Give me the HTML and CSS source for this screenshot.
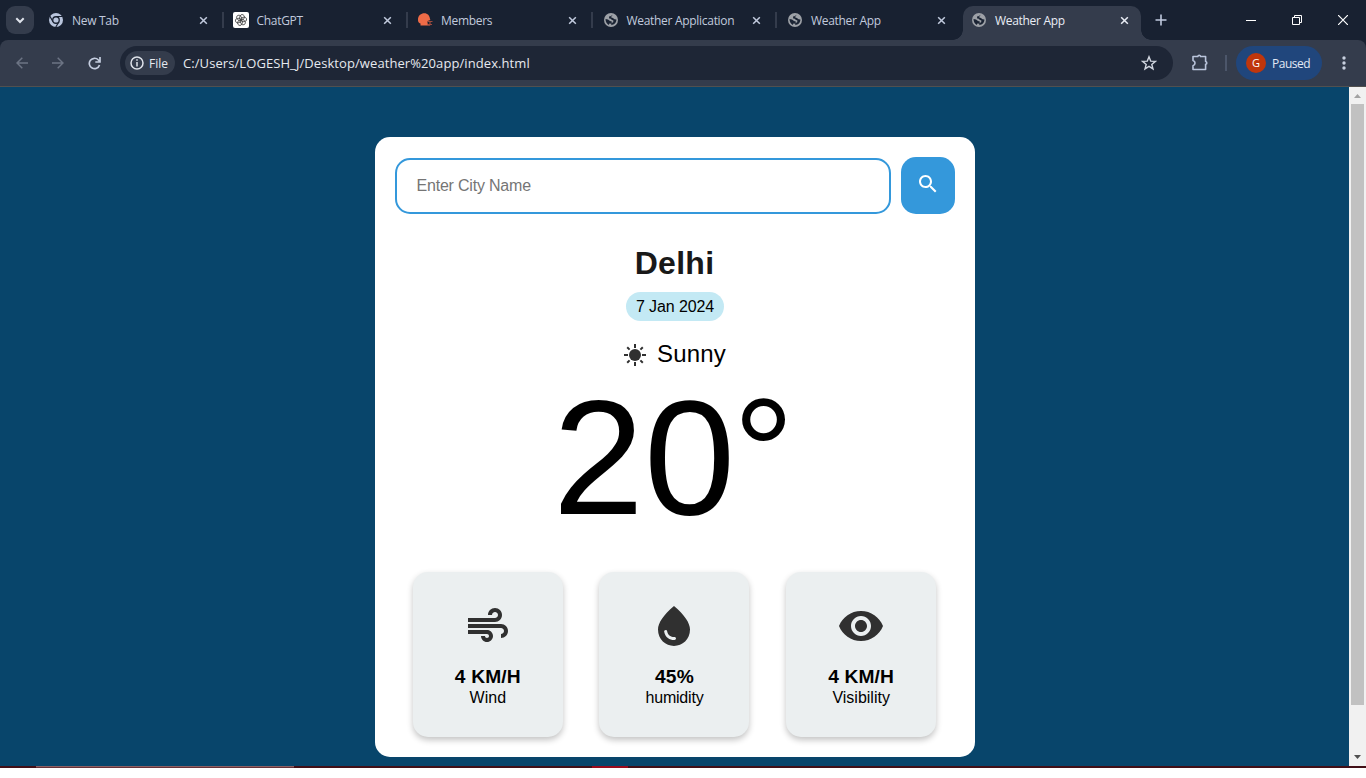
FILE: index.html
```
<!DOCTYPE html>
<html lang="en">
<head>
<meta charset="utf-8">
<title>Weather App</title>
<link rel="stylesheet" href="styles.css">
</head>
<body>
<svg class="defs" width="0" height="0">
  <symbol id="x" viewBox="0 0 10 10"><path d="M1.3 1.3l7.4 7.4M8.7 1.3L1.3 8.7" stroke="currentColor" stroke-width="1.7" fill="none"/></symbol>
  <symbol id="globe" viewBox="0 0 14 14"><circle cx="7" cy="7" r="7" fill="#9da1a7"/><path d="M1.500 6l2.500.5 2 1.500 1.800.4-.2 1.800-2.200.3-.6 1.500C3 11 1.500 9 1.500 6zM8.800 1.800L6.500 3.200 5 3.600l.2 1.800 1.600.4.8 1 1.800.6-.2 1.800-1.600.8-.4 2.200c3.200-.4 5.300-2.700 5.200-5.600l-1.800-.4-1.700-1.300-1.900-.6.6-1.100z" fill="#1b2434"/></symbol>
</svg>
<div class="browser">
  <div class="tabstrip">
    <div class="tabsearch"><svg width="10" height="7" viewBox="0 0 10 7"><path d="M1.300 1.300L5 5l3.700-3.700" stroke="#dfe3ec" stroke-width="2" fill="none"/></svg></div>
    <div class="tabs">
      <div class="tab"><svg class="fav" viewBox="0 0 16 16"><circle cx="8" cy="8" r="7" fill="#b9c5dd"/><path d="M8 4.500h6.500M5 9.700L1.900 4.200M11 9.700L7.800 15" stroke="#182131" stroke-width="1.200"/><circle cx="8" cy="8" r="3.900" fill="#182131"/><circle cx="8" cy="8" r="2.600" fill="#b9c5dd"/></svg><span class="title">New Tab</span><svg class="close"><use href="#x"/></svg></div>
      <div class="tab"><svg class="fav" viewBox="0 0 16 16"><rect width="16" height="16" rx="2" fill="#fff"/><g fill="none" stroke="#444" stroke-width=".8"><ellipse cx="8" cy="5.200" rx="2.300" ry="2.900" transform="rotate(20 8 8)"/><ellipse cx="8" cy="5.200" rx="2.300" ry="2.900" transform="rotate(80 8 8)"/><ellipse cx="8" cy="5.200" rx="2.300" ry="2.900" transform="rotate(140 8 8)"/><ellipse cx="8" cy="5.200" rx="2.300" ry="2.900" transform="rotate(200 8 8)"/><ellipse cx="8" cy="5.200" rx="2.300" ry="2.900" transform="rotate(260 8 8)"/><ellipse cx="8" cy="5.200" rx="2.300" ry="2.900" transform="rotate(320 8 8)"/></g></svg><span class="title">ChatGPT</span><svg class="close"><use href="#x"/></svg></div>
      <div class="tab"><svg class="fav" viewBox="0 0 16 16"><path d="M3.500 13.500V11.500C1.500 11 .8 9.500 1 7c.4-3.500 3-5.700 6.300-5.700S12.700 3.600 13 7l.4 1-2.900 1v2.500l3 2z" fill="#ee6b47"/><path d="M10 9.500h5.500M10.500 12.500h4.500M13 9.500v3" stroke="#9c4b3e" stroke-width="1.200"/></svg><span class="title">Members</span><svg class="close"><use href="#x"/></svg></div>
      <div class="tab"><svg class="fav globe"><use href="#globe"/></svg><span class="title">Weather Application</span><svg class="close"><use href="#x"/></svg></div>
      <div class="tab"><svg class="fav globe"><use href="#globe"/></svg><span class="title">Weather App</span><svg class="close"><use href="#x"/></svg></div>
      <div class="tab active"><svg class="fav globe"><use href="#globe"/></svg><span class="title">Weather App</span><svg class="close"><use href="#x"/></svg></div>
    </div>
    <svg class="plus" width="12" height="12" viewBox="0 0 12 12"><path d="M6 .5v11M.5 6h11" stroke="#c0cadf" stroke-width="1.600"/></svg>
    <div class="controls">
      <svg width="10" height="10" viewBox="0 0 10 10"><path d="M0 5.500h10" stroke="#fff"/></svg>
      <svg width="10" height="10" viewBox="0 0 10 10"><path d="M.5 2.500h7v7h-7zM2.500 2.500v-2h7v7h-2" stroke="#fff" fill="none"/></svg>
      <svg width="10" height="10" viewBox="0 0 10 10"><path d="M0 0l10 10M10 0L0 10" stroke="#fff" stroke-width="1.200"/></svg>
    </div>
  </div>
  <div class="toolbar">
    <svg class="nav" width="12" height="12" viewBox="0 0 12 12"><path d="M12 6H1M6.300.7L1 6l5.300 5.300" stroke="#6c7484" stroke-width="1.500" fill="none"/></svg>
    <svg class="nav fwd" width="12" height="12" viewBox="0 0 12 12"><path d="M0 6h11M5.700.7L11 6l-5.300 5.300" stroke="#6c7484" stroke-width="1.500" fill="none"/></svg>
    <svg class="nav reload" width="13" height="13" viewBox="0 0 13 13"><path d="M11.500 8A5.200 5.200 0 1 1 10.400 3L12 4.600M12 0v5H7.300" stroke="#c5cee0" stroke-width="1.700" fill="none"/></svg>
    <div class="omnibox">
      <div class="chip"><svg width="14" height="14" viewBox="0 0 14 14"><circle cx="7" cy="7" r="6" stroke="#dfe3ea" stroke-width="1.500" fill="none"/><path d="M7 6v4.500M7 3.300v1.500" stroke="#dfe3ea" stroke-width="1.500"/></svg><span class="file">File</span></div>
      <span class="url">C:/Users/LOGESH_J/Desktop/weather%20app/index.html</span>
      <svg class="star" width="16" height="16" viewBox="0 0 16 16"><path d="M8 1.800l1.700 4.300 4.700.3-3.600 3 1.200 4.500L8 11.400l-4 2.500 1.200-4.500-3.600-3 4.700-.3z" stroke="#d0d5df" stroke-width="1.400" fill="none"/></svg>
    </div>
    <svg class="ext" width="18" height="18" viewBox="0 0 18 18"><path d="M2 2.500h4.800c.4-1.600 2.400-1.600 2.800 0h5v5c1.600.4 1.600 2.400 0 2.800v5.200H2v-3.800c2.700-.8 2.700-4.400 0-5.200z" stroke="#bac5dc" stroke-width="1.600" stroke-linejoin="round" fill="none"/></svg>
    <div class="divider"></div>
    <div class="profile"><span class="avatar">G</span><span class="paused">Paused</span></div>
    <svg class="menu" width="4" height="14" viewBox="0 0 4 14"><g fill="#c8d0df"><circle cx="2" cy="2" r="1.700"/><circle cx="2" cy="7" r="1.700"/><circle cx="2" cy="12" r="1.700"/></g></svg>
  </div>
</div>
<div class="viewport">
  <main class="page">
    <section class="card">
      <div class="search">
        <input class="city-input" type="text" placeholder="Enter City Name">
        <button class="search-btn"><svg width="24" height="24" viewBox="0 0 24 24" fill="#fff"><path d="M15.500 14h-.79l-.28-.27C15.410 12.590 16 11.110 16 9.500 16 5.910 13.090 3 9.500 3S3 5.910 3 9.500 5.910 16 9.500 16c1.610 0 3.090-.59 4.230-1.570l.27.28v.79l5 4.990L20.490 19l-4.990-5zm-6 0C7.010 14 5 11.990 5 9.500S7.010 5 9.500 5 14 7.010 14 9.500 11.990 14 9.500 14z"/></svg></button>
      </div>
      <h1 class="city">Delhi</h1>
      <div class="date">7 Jan 2024</div>
      <div class="condition"><svg width="24" height="24" viewBox="0 0 24 24"><circle cx="12" cy="12" r="6" fill="#303030"/><path d="M1 12h4M19 12h4M12 1v4M12 19v4M4.200 4.200l2.400 2.400M17.400 17.400l2.400 2.400M4.200 19.800l2.400-2.400M17.400 6.600l2.400-2.400" stroke="#303030" stroke-width="2"/></svg><span class="sky">Sunny</span></div>
      <div class="temp">20<span class="degree">°</span></div>
      <div class="details">
        <div class="detail"><svg width="48" height="48" viewBox="0 0 24 24"><path d="M14.500 17c0 1.650-1.350 3-3 3s-3-1.350-3-3h2c0 .55.45 1 1 1s1-.45 1-1-.45-1-1-1H2v-2h9.500c1.650 0 3 1.350 3 3zM19 6.500C19 4.570 17.430 3 15.500 3S12 4.570 12 6.500h2c0-.83.67-1.500 1.500-1.500s1.500.67 1.500 1.500S16.330 8 15.500 8H2v2h13.500c1.930 0 3.500-1.570 3.500-3.500zm-.5 4.500H2v2h16.500c.83 0 1.500.67 1.500 1.500s-.67 1.500-1.500 1.500v2c1.930 0 3.500-1.570 3.500-3.500S20.430 11 18.500 11z"/></svg><strong>4 KM/H</strong><span>Wind</span></div>
        <div class="detail"><svg width="48" height="48" viewBox="0 0 24 24"><path d="M12 2c-5.330 4.550-8 8.480-8 11.800 0 4.980 3.800 8.200 8 8.200s8-3.220 8-8.200c0-3.320-2.670-7.250-8-11.800zm-4.170 12c.37 0 .67.26.74.6.41 2.220 2.280 2.980 3.640 2.870.43-.02.79.32.79.75 0 .4-.32.73-.72.75-2.130.13-4.620-1.090-5.190-4.120-.08-.45.28-.85.74-.85z"/></svg><strong>45%</strong><span class="tight">humidity</span></div>
        <div class="detail"><svg width="48" height="48" viewBox="0 0 24 24"><path d="M12 4.500C7 4.500 2.730 7.610 1 12c1.730 4.390 6 7.500 11 7.500s9.270-3.110 11-7.500c-1.730-4.390-6-7.500-11-7.500zM12 17c-2.760 0-5-2.240-5-5s2.240-5 5-5 5 2.240 5 5-2.240 5-5 5zm0-8c-1.660 0-3 1.340-3 3s1.340 3 3 3 3-1.340 3-3-1.340-3-3-3z"/></svg><strong>4 KM/H</strong><span>Visibility</span></div>
      </div>
    </section>
  </main>
  <div class="scrollbar">
    <svg width="7" height="4" viewBox="0 0 7 4"><path d="M0 4L3.500 0 7 4z" fill="#a3a3a3"/></svg>
    <div class="thumb"></div>
    <svg class="down" width="7" height="4" viewBox="0 0 7 4"><path d="M0 0l3.500 4L7 0z" fill="#505050"/></svg>
  </div>
</div>
<div class="taskbar"><div class="task-search"></div><div class="task-active"></div></div>
</body>
</html>
```
FILE: styles.css
```
* { box-sizing: border-box; }
body { margin: 0; height: 778px; overflow: hidden; background: #fff; font-family: "Liberation Sans", Arial, sans-serif; }
svg { display: block; flex: none; }
.defs { position: absolute; }
.browser { height: 87px; background: #182131; border-bottom: 1px solid #51504f; font-family: "Open Sans", "Noto Sans", sans-serif; }
.tabstrip { height: 40px; display: flex; align-items: center; background: #182131; }
.tabsearch { width: 28px; height: 28px; margin-left: 6px; border-radius: 9px; background: #343c4c; display: flex; align-items: center; justify-content: center; }
.tabs { display: flex; margin-left: 4px; height: 40px; }
.tab { position: relative; width: 184.500px; height: 40px; display: flex; align-items: center; padding: 0 15px 0 10px; color: #c1cadd; }
.tab::after { content: ""; position: absolute; right: -1px; top: 12px; width: 2px; height: 16px; background: #343c4c; }
.tab:nth-child(n+5)::after { display: none; }
.fav { width: 16px; height: 16px; }
.fav.globe { width: 14px; height: 14px; margin: 0 1px 0 2px; }
.title { margin-left: 8px; font-size: 12px; letter-spacing: -.3px; white-space: nowrap; flex: 1; }
.close { width: 9px; height: 9px; }
.tab.active { z-index: 1; width: 178px; margin: 6px 0 0 2.500px; height: 34px; padding: 0 12px 6px 7px; border-radius: 10px 10px 0 0; background: #343c4c; color: #e9edf5; }
.tab.active::before, .tab.active::after { content: ""; display: block; position: absolute; top: auto; bottom: 0; width: 10px; height: 10px; background: radial-gradient(circle at 0 0, transparent 9.500px, #343c4c 10px); }
.tab.active::before { left: -10px; }
.tab.active::after { right: -10px; background: radial-gradient(circle at 100% 0, transparent 9.500px, #343c4c 10px); }
.plus { margin-left: 14px; }
.controls { margin-left: auto; display: flex; gap: 36px; padding-right: 18px; }
.toolbar { height: 46px; background: #343c4c; border-radius: 8px 8px 0 0; display: flex; align-items: center; padding-left: 16px; }
.fwd { margin-left: 24px; }
.reload { margin-left: 24px; }
.omnibox { margin-left: 19px; width: 1053px; height: 34px; border-radius: 17px; background: #1e2636; display: flex; align-items: center; padding: 0 16px 0 5px; }
.chip { width: 50px; height: 24px; border-radius: 12px; background: #343c4c; display: flex; align-items: center; padding-left: 5px; color: #e6e9ef; font-size: 12px; }
.file { margin-left: 5px; }
.url { margin-left: 8px; font-size: 13px; letter-spacing: .08px; color: #e6e9ef; flex: 1; white-space: nowrap; }
.ext { margin-left: 18px; }
.divider { margin-left: 16px; width: 2px; height: 16px; background: #4c566a; }
.profile { margin-left: 9px; width: 86px; height: 34px; border-radius: 17px; background: #20467c; display: flex; align-items: center; padding-left: 10px; color: #e1e8f5; font-size: 12px; }
.avatar { width: 20px; height: 20px; border-radius: 10px; background: #bf360c; color: #fff; text-align: center; line-height: 20px; font-size: 11px; }
.paused { margin-left: 6px; letter-spacing: -.5px; }
.menu { margin-left: 20px; }
.viewport { height: 679px; display: flex; background: #08456b; }
.page { flex: 1; padding-top: 50px; }
.card { width: 600px; height: 620px; margin: 0 auto; padding: 20px; border-radius: 15px; background: #fff; display: flex; flex-direction: column; align-items: center; }
.search { width: 560px; height: 57px; display: flex; gap: 10px; }
.city-input { flex: 1; height: 56px; margin-top: 1px; padding: 0 20px; border: 2px solid #3498db; border-radius: 15px; background: #fff; font: 16px "Liberation Sans", Arial, sans-serif; letter-spacing: -.2px; outline: none; }
.city-input::placeholder { color: #757575; opacity: 1; }
.search-btn { width: 54px; height: 57px; border: 0; border-radius: 15px; background: #3498db; padding: 0 0 3px; display: flex; align-items: center; justify-content: center; }
.city { margin: 31px 0 0; font-size: 32px; letter-spacing: .3px; line-height: 36px; color: #191919; }
.date { margin-top: 11px; width: 98px; height: 29px; margin-left: 1px; border-radius: 15px; background: #c3e9f4; font-size: 16px; letter-spacing: -.1px; line-height: 29px; text-align: center; }
.condition { margin-top: 20px; height: 28px; display: flex; align-items: center; gap: 10px; font-size: 24px; line-height: 28px; }
.sky { margin-top: -2px; letter-spacing: .2px; }
.temp { height: 184px; margin-top: -3px; font-size: 164px; line-height: 184px; }
.degree { margin-left: -2px; margin-right: 2px; font-size: 153px; line-height: 0; vertical-align: 9px; }
.details { width: 560px; margin-top: 22px; display: flex; justify-content: space-around; }
.detail { width: 150px; height: 165px; padding-top: 30px; border-radius: 15px; background: #ebeff0; box-shadow: 0 3px 6px rgba(0, 0, 0, .24); display: flex; flex-direction: column; align-items: center; font-size: 16px; line-height: 18px; }
.detail svg { fill: #303030; }
.detail strong { margin-top: 16px; margin-bottom: 1px; font-size: 19.200px; letter-spacing: .15px; line-height: 22px; }
.tight { letter-spacing: -.2px; }
.scrollbar { width: 17px; background: #f1f1f1; display: flex; flex-direction: column; align-items: center; padding: 7px 0; }
.thumb { width: 13px; height: 601px; margin-top: 6px; background: #c1c1c1; }
.down { margin-top: auto; }
.taskbar { height: 2px; background: #420f16; display: flex; }
.task-search { margin-left: 36px; width: 258px; background: #683239; border-top: 1px solid #8c6063; }
.task-active { margin-left: 298px; width: 36px; background: #9a0a1c; }
```
